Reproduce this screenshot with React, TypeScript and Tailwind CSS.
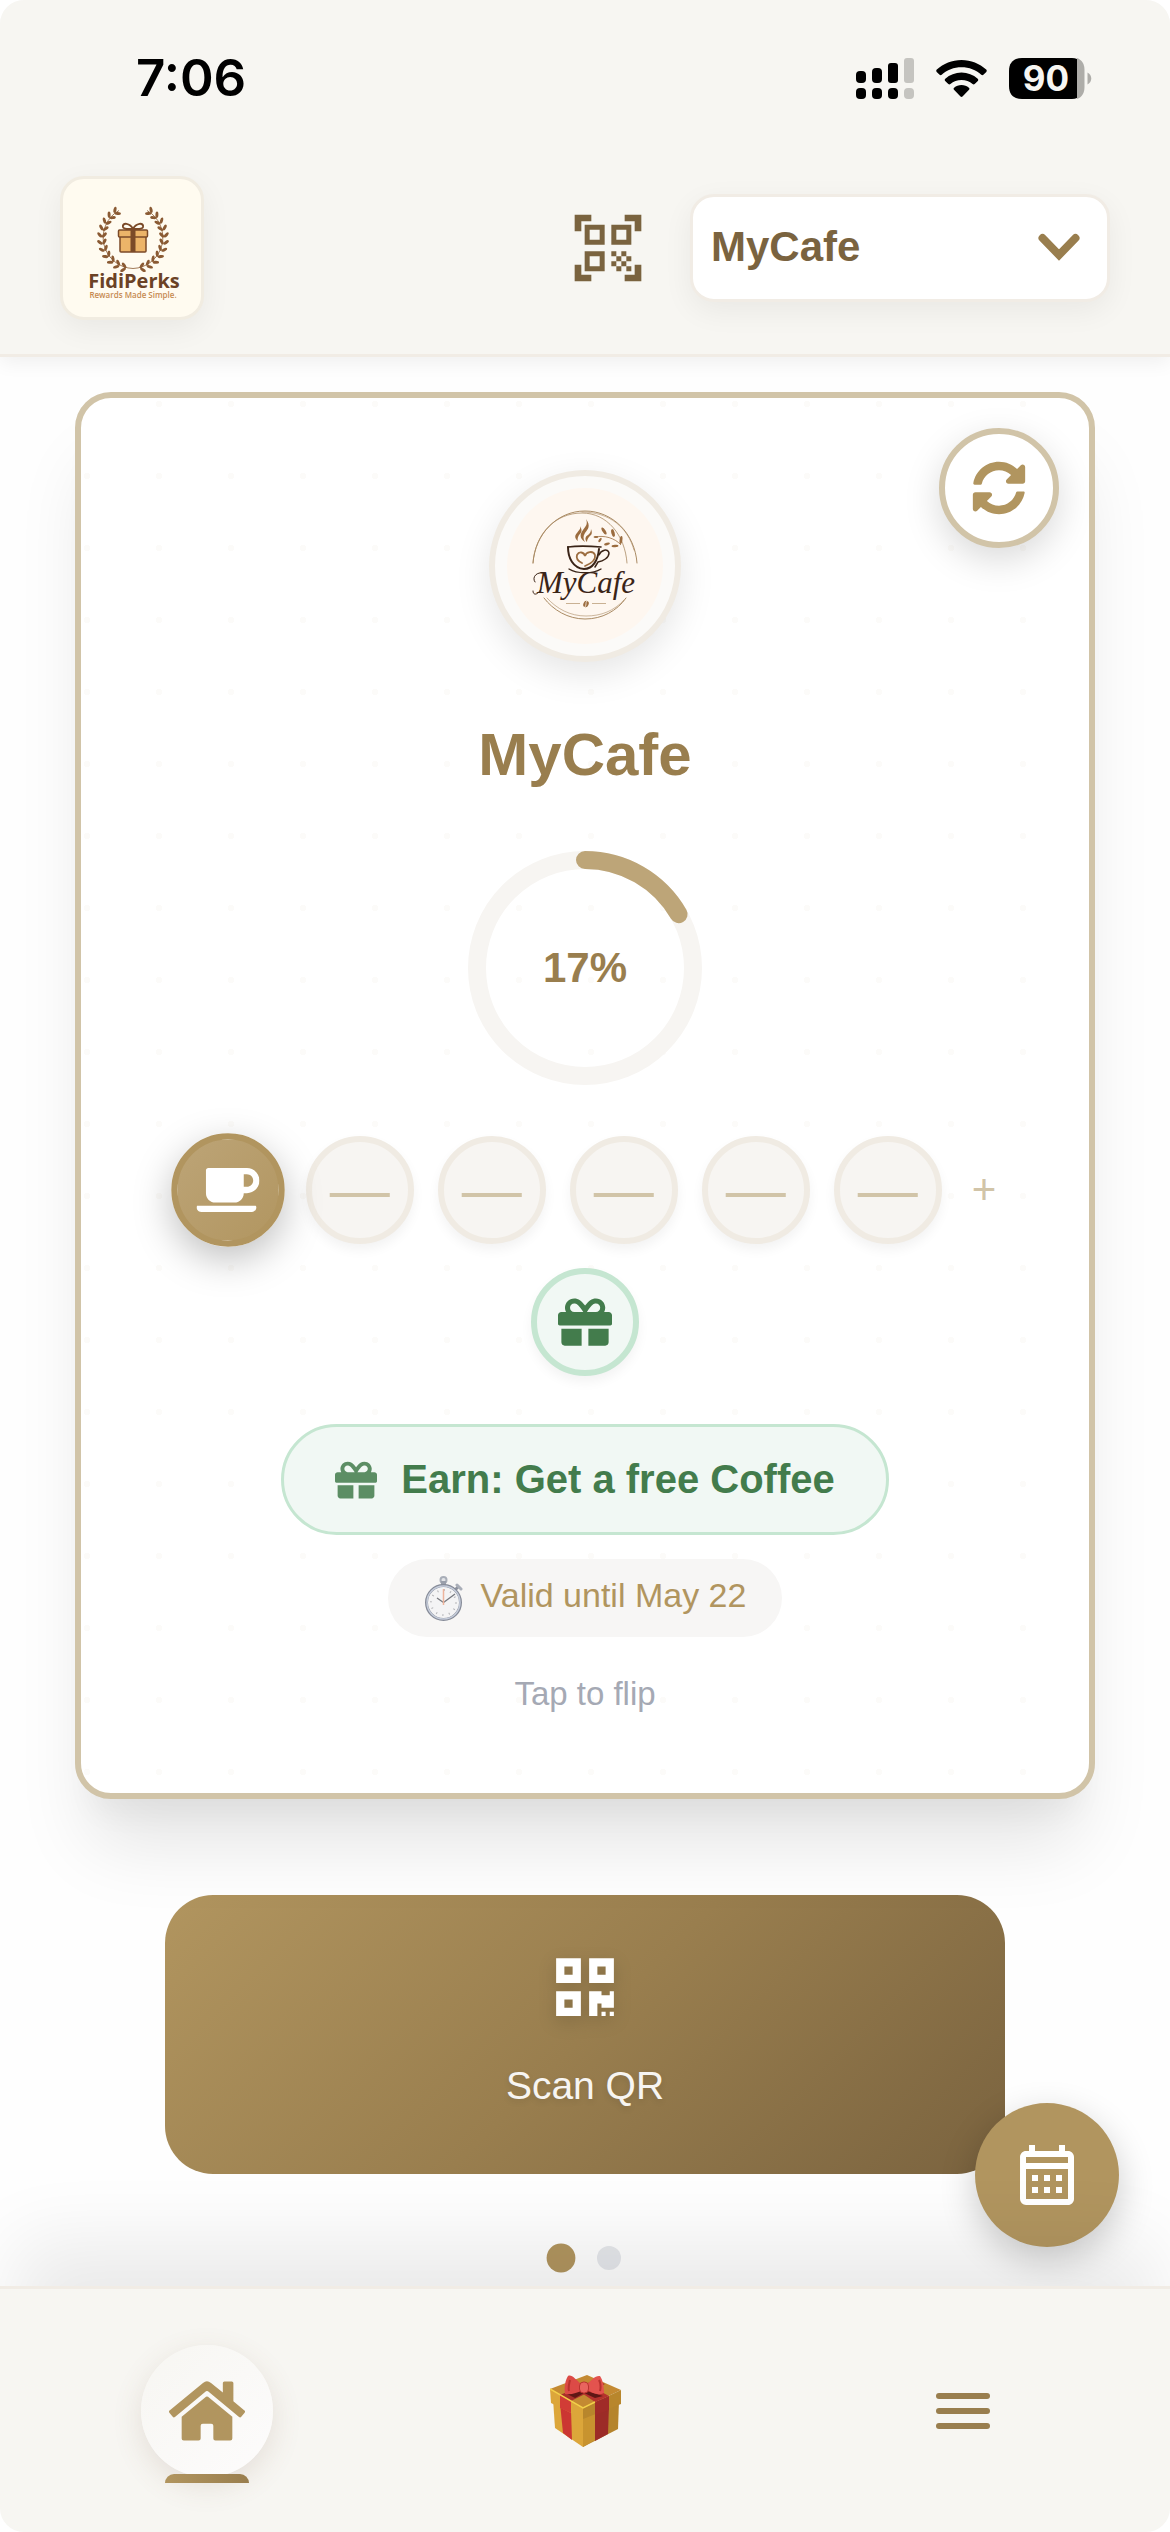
import { useState } from "react";
import { FaCoffee, FaGift, FaHome, FaQrcode, FaSyncAlt } from "react-icons/fa";
import { MdOutlineCalendarMonth, MdQrCodeScanner } from "react-icons/md";

const cafes = ["MyCafe"];
const TOTAL_STAMPS = 6;
const RING_LENGTH = 2 * Math.PI * 108;

/* STATUS BAR ICONS */
function SignalIcon() {
  return (
    <svg width="58" height="41" viewBox="0 0 58 41" aria-hidden="true">
      <rect x="0" y="13" width="10" height="12" rx="4" />
      <rect x="16" y="10" width="10" height="15" rx="4" />
      <rect x="32" y="5" width="10" height="20" rx="3" />
      <rect x="48" y="0" width="10" height="25" rx="3" fill="#c5c4c0" />
      <rect x="0" y="30" width="10" height="11" rx="4" />
      <rect x="16" y="30" width="10" height="11" rx="4" />
      <rect x="32" y="30" width="10" height="11" rx="4" />
      <rect x="48" y="30" width="10" height="11" rx="4" fill="#c5c4c0" />
    </svg>
  );
}

function WifiIcon() {
  return (
    <svg width="51" height="37" viewBox="0 0 51 37" aria-hidden="true">
      <path d="M25.500 0C35 0 43.600 3.500 50.200 9.600c.7.700.7 1.600.1 2.300l-2.900 2.900c-.6.600-1.500.600-2.100 0C40 9.900 33.100 7.300 25.500 7.300S11 9.900 5.700 14.800c-.6.600-1.500.600-2.100 0L.7 11.900c-.6-.7-.6-1.600.1-2.300C7.400 3.500 16 0 25.500 0Z" />
      <path d="M25.500 12.600c6.200 0 11.800 2.300 16.200 6.100.7.600.7 1.600.1 2.200l-3.100 3.100c-.6.600-1.500.600-2.100.1-3-2.600-6.900-4.100-11.100-4.100s-8.100 1.500-11.100 4.100c-.6.500-1.500.500-2.100-.1l-3.100-3.100c-.6-.6-.6-1.600.1-2.200 4.400-3.800 10-6.100 16.200-6.100Z" />
      <path d="M25.500 25c2.800 0 5.400 1 7.400 2.700.7.600.7 1.500.1 2.100l-6.500 6.700c-.6.600-1.400.600-2 0L18 29.800c-.6-.6-.6-1.500.1-2.100 2-1.700 4.600-2.700 7.400-2.700Z" />
    </svg>
  );
}

function BatteryIcon() {
  return (
    <svg width="83" height="41" viewBox="0 0 83 41" role="img" aria-label="Battery 90 percent">
      <path d="M68 0c5 2 7.500 6 7.500 12v17c0 6-2.500 10-7.500 12Z" fill="#aeada9" />
      <path d="M13 0h50c2 0 3.600.3 5 .9v39.200c-1.400.6-3 .9-5 .9H13C4.500 41 0 36.500 0 28V13C0 4.500 4.500 0 13 0Z" />
      <path d="M78.500 14.500c5 2.500 5 9.500 0 12Z" fill="#aeada9" />
      <text x="37" y="33" textAnchor="middle" fill="#f7f6f2" className="font-['Inter',sans-serif] text-[35px] font-bold">
        90
      </text>
    </svg>
  );
}

/* LOGOS */
function FidiPerksLogo() {
  // leaf pairs follow the left half of the wreath, the right half is its mirror
  const leaves = Array.from({ length: 11 }, (_, i) => {
    const angle = 103 + i * 13;
    const rad = (angle * Math.PI) / 180;
    return { x: 70 + 31 * Math.cos(rad), y: 59 + 31 * Math.sin(rad), angle };
  });
  const half = (
    <>
      <path d="M70 89.500A31 31 0 0 1 56 31.500" fill="none" stroke="#8a5a33" strokeWidth=".8" />
      {leaves.map((leaf) => (
        <g key={leaf.angle} transform={`translate(${leaf.x} ${leaf.y}) rotate(${leaf.angle + 90})`}>
          <ellipse cx="2.500" cy="-2.300" rx="3.200" ry="1.500" transform="rotate(-42 2.500 -2.300)" />
          <ellipse cx="2.500" cy="2.300" rx="3.200" ry="1.500" transform="rotate(42 2.500 2.300)" />
        </g>
      ))}
    </>
  );
  return (
    <svg viewBox="0 0 138 138" className="h-full w-full" role="img" aria-label="FidiPerks">
      <g fill="#8a5a33">{half}</g>
      <g fill="#8a5a33" transform="translate(140 0) scale(-1 1)">
        {half}
      </g>
      <g stroke="#7b4a28" strokeWidth="1.500">
        <rect x="57" y="57" width="26" height="16" rx="1" fill="#ecb469" />
        <rect x="55.500" y="51" width="29" height="7" rx="1" fill="#ecb469" />
        <path d="M70 50c-3-6-11-7-10-2 1 3 6 2 10 2Zm0 0c3-6 11-7 10-2-1 3-6 2-10 2Z" fill="none" strokeWidth="2" />
      </g>
      <rect x="67.500" y="49" width="5" height="24" fill="#7b4a28" />
      <text x="71" y="109" textAnchor="middle" fill="#6b4226" className="font-['Open_Sans',sans-serif] text-[20px] font-bold">
        FidiPerks
      </text>
      <text x="70" y="119" textAnchor="middle" fill="#c68a50" className="font-['Open_Sans',sans-serif] text-[8px] font-semibold">
        Rewards Made Simple.
      </text>
    </svg>
  );
}

function MyCafeLogo() {
  return (
    <svg viewBox="0 0 156 156" className="size-[156px] rounded-full bg-[#fef7f0]" role="img" aria-label="MyCafe">
      <g fill="none" stroke="#a98a63" strokeWidth="1" strokeLinecap="round">
        <path d="M26 75C28 46 50 23 78 23s50 23 52 52" />
        <path d="M26 75C28 46 48 25 75 25c25 0 43 22 45 50" strokeWidth=".8" />
        <path d="M75 24c28 0 46 16 52 38" strokeWidth=".6" />
        <path d="M37 110c9 12 24 21 41 21s32-8 41-21" />
        <path d="M40 110c10 11 23 18 39 18 15 0 28-5 38-16" strokeWidth=".6" />
      </g>
      <g fill="#9b6c3f">
        <path d="M79 31c5 7 2 10-1 14-2 3-2 6 0 9-6-4-5-8-2-12 3-4 5-6 3-11Z" />
        <path d="M73 38c3 5 1 7-1 9-1 2-2 4-1 6-4-3-3-6-1-8 2-3 4-4 3-7ZM84 41c2 5 0 6-2 8-1 1-2 3-2 5-3-3-1-6 1-7 2-2 3-3 3-6Z" />
        <ellipse cx="97" cy="43" rx="4" ry="1.600" transform="rotate(58 97 43)" />
        <ellipse cx="106" cy="45" rx="4" ry="1.600" transform="rotate(75 106 45)" />
        <ellipse cx="114" cy="52" rx="4" ry="1.400" transform="rotate(98 114 52)" />
        <ellipse cx="93" cy="52" rx="2.500" ry="1.100" transform="rotate(125 93 52)" />
        <ellipse cx="100" cy="56" rx="3" ry="1.200" transform="rotate(165 100 56)" />
        <ellipse cx="108" cy="58" rx="3.500" ry="1.200" transform="rotate(175 108 58)" />
        <ellipse cx="89" cy="49" rx="2.500" ry="1" />
        <ellipse cx="79" cy="116" rx="2.600" ry="3.300" transform="rotate(25 79 116)" />
      </g>
      <path d="M88 49c9-2 20 1 26 8" fill="none" stroke="#9b6c3f" strokeWidth=".8" />
      <path d="M80 113c-2 2 0 3-2 6" fill="none" stroke="#fef7f0" strokeWidth=".8" />
      <path d="M59 115.500h14M85 115.500h14" stroke="#c9b193" strokeWidth="1" />
      <g fill="none" stroke="#3a2417" strokeLinecap="round">
        <path d="M61 59c7-1 22-1 33 0" strokeWidth="1.600" />
        <path d="M61 59c0 11 5 21 16 22 9 0 14-9 15-20" strokeWidth="2" />
        <path d="M92 67c2-5 9-7 10-2 0 5-6 8-11 9l-3 5" strokeWidth="1.500" />
        <path d="M62 81c8 5 24 5 32 0" strokeWidth="1.400" />
      </g>
      <path d="M75 75c-4-2-6-5-5-8 2-4 7-3 8 1 1-4 8-6 10-1 1 5-5 9-10 11" fill="none" stroke="#9b6c3f" strokeWidth="1.800" strokeLinecap="round" />
      <path d="M38 86c-7-4-14 3-10 8M34 101c-3 6-8 7-8 2" fill="none" stroke="#3a2417" strokeWidth="1" strokeLinecap="round" />
      <text x="79" y="105" textAnchor="middle" fill="#3a2417" className="font-['Liberation_Serif',serif] text-[31px] italic">
        MyCafe
      </text>
    </svg>
  );
}

function StopwatchIcon() {
  return (
    <svg width="39" height="45" viewBox="0 0 39 45" aria-hidden="true">
      <circle cx="19.500" cy="4" r="3" fill="#e3e4e8" stroke="#a9aeb8" strokeWidth="2" />
      <rect x="17" y="5" width="5" height="5" fill="#9a9fab" />
      <path d="m31 14 4-4" stroke="#8d929e" strokeWidth="3" />
      <path d="m33 9 4 4" stroke="#a9aeb8" strokeWidth="3" strokeLinecap="round" />
      <circle cx="19.500" cy="26.500" r="17" fill="#f4f4f5" stroke="#878c99" strokeWidth="3" />
      <circle cx="19.500" cy="26.500" r="16.500" fill="none" stroke="#c6cddb" strokeWidth="1.500" />
      <circle cx="19.500" cy="26.500" r="12.500" fill="none" stroke="#b3b3b6" strokeWidth="2" strokeDasharray="1 5.540" />
      <path d="M19.500 26.500 13 22M19.500 26.500 31 18" stroke="#77797f" strokeWidth="1.300" />
      <path d="M19.500 29V13" stroke="#eeb49c" strokeWidth="1.500" />
    </svg>
  );
}

function PresentIcon() {
  return (
    <svg width="71" height="72" viewBox="0 0 71 72" aria-hidden="true">
      <path d="M3 24 33 42v30L5 53Z" fill="#dca63a" />
      <path d="M33 42 69 26l-1 28-35 18Z" fill="#b5842d" />
      <path d="M33 42l12-5v28l-12 7Z" fill="#c8932f" />
      <path d="m10 28 11 7 1 30-9-7Z" fill="#cb3632" />
      <path d="m45 37 14-7-1 29-13 7Z" fill="#9c2b27" />
      <path d="M0 14 37 0l34 15-38 18Z" fill="#c48a32" />
      <path d="M0 14 33 33v11L1 28Z" fill="#dca63a" />
      <path d="m33 33 38-18v14L33 44Z" fill="#b8862c" />
      <path d="m10 20 11 6v12l-11-5Z" fill="#d13c36" />
      <path d="m45 27 14-6v14l-14 5Z" fill="#a02b28" />
      <path d="m10 20 35-15 10 4-34 17Z" fill="#a82f2a" />
      <path d="m20 10 25 17 14-6L35 8Z" fill="#b5322d" />
      <path d="M0 14 33 33l12-6" fill="none" stroke="#f3cf49" strokeWidth="1.500" />
      <path d="M17 19 33 15l20 6-8 2-11-5-9 5Z" fill="#5f1715" />
      <path d="M32 10C26 5 22-1 18 1c-3 5-4 12-3 18 6 1 12-1 18-4Z" fill="#dc4a46" />
      <path d="M36 10c5-4 9-10 14-9 3 4 4 12 4 17-6 3-12 0-18-4Z" fill="#e3534e" />
      <path d="M20 5c-1 4-2 8-1 11M49 5c2 4 2 7 1 11" fill="none" stroke="#b9322f" strokeWidth="2" />
      <rect x="29.500" y="7" width="9" height="11" rx="4" fill="#e9645e" stroke="#b9322f" strokeWidth="1" />
    </svg>
  );
}

/* LOYALTY CARD */
function ProgressRing({ stamps }: { stamps: number }) {
  const ratio = stamps / TOTAL_STAMPS;
  return (
    <div className="relative mt-[60px] size-[234px]">
      <svg viewBox="0 0 234 234" className="size-full -rotate-90" aria-hidden="true">
        <circle cx="117" cy="117" r="108" fill="none" stroke="#f7f5f2" strokeWidth="18" />
        <circle
          cx="117"
          cy="117"
          r="108"
          fill="none"
          stroke="#bda578"
          strokeWidth="18"
          strokeLinecap="round"
          strokeDasharray={`${ratio * RING_LENGTH} ${RING_LENGTH}`}
        />
      </svg>
      <span className="absolute inset-0 flex items-center justify-center pb-0.5 text-[42px] font-bold text-[#997e4e]">
        {Math.round(ratio * 100)}%
      </span>
    </div>
  );
}

function Stamp({ filled }: { filled: boolean }) {
  if (filled) {
    return (
      <div className="flex size-[108px] scale-105 items-center justify-center rounded-full border-6 border-[#b1955f] bg-linear-135 from-[#bda578] to-[#b1955f] bg-origin-border text-white shadow-[0_12px_36px_rgba(0,0,0,0.25)]">
        <FaCoffee size={60} />
      </div>
    );
  }
  return (
    <div className="flex size-[108px] items-center justify-center rounded-full border-6 border-[#f0ebe3] bg-[#f7f5f2] text-[60px] leading-none text-[#d1c4a8] shadow-[0_6px_12px_rgba(0,0,0,0.05)]">
      —
    </div>
  );
}

export default function App() {
  const [cafe, setCafe] = useState(cafes[0]);
  const stamps = 1;

  return (
    <div className="flex min-h-screen w-full flex-col overflow-hidden rounded-3xl bg-[#fefefe] font-['Liberation_Sans',Arial,sans-serif]">
      {/* HEADER */}
      <header className="relative z-10 border-b-3 border-[#f1ece5] bg-[#f7f6f2] shadow-[0_6px_18px_rgba(0,0,0,0.06)]">
        <div className="flex h-[156px] items-center justify-between pr-[78px] pl-[136px]">
          <span className="font-['Inter',sans-serif] text-[51px] font-semibold text-black">7:06</span>
          <div className="flex items-center gap-[22px]">
            <SignalIcon />
            <WifiIcon />
            <BatteryIcon />
          </div>
        </div>

        <div className="flex items-center justify-between px-[60px] pt-5 pb-[34px]">
          <div className="size-36 overflow-hidden rounded-3xl border-3 border-[#f1ece1] bg-[#fffbf0] shadow-[0_9px_30px_rgba(0,0,0,0.06)]">
            <FidiPerksLogo />
          </div>
          <div className="flex items-center gap-[42px]">
            <button type="button" aria-label="Scan code" className="text-[#7a633f]">
              <MdQrCodeScanner size={80} />
            </button>
            <div className="relative">
              <select
                aria-label="Cafe"
                value={cafe}
                onChange={(e) => setCafe(e.target.value)}
                className="h-[108px] w-[420px] appearance-none rounded-3xl border-3 border-[#f1ece5] bg-white pr-24 pb-1 pl-[18px] text-[42px] font-bold text-[#7a633f] shadow-[0_9px_30px_rgba(0,0,0,0.06)]"
              >
                {cafes.map((name) => (
                  <option key={name}>{name}</option>
                ))}
              </select>
              <svg
                viewBox="0 0 42 29"
                className="pointer-events-none absolute top-[39px] right-[30px] w-[42px]"
                aria-hidden="true"
              >
                <path d="m4.500 5 16.500 17L37.500 5" fill="none" stroke="#997e4e" strokeWidth="8" strokeLinecap="round" />
              </svg>
            </div>
          </div>
        </div>
      </header>

      <main className="flex flex-1 flex-col items-center px-[75px] pt-[35px]">
        {/* LOYALTY CARD */}
        <section className="relative flex w-full flex-col items-center rounded-[36px] border-6 border-[#d1c4a8] bg-white bg-[radial-gradient(circle_at_6px_6px,#fcfbf9_3px,transparent_3px)] bg-size-[72px_72px] px-12 pt-[72px] pb-[75px] shadow-[0_60px_75px_-15px_rgba(0,0,0,0.1),0_30px_30px_-15px_rgba(0,0,0,0.04)]">
          <button
            type="button"
            aria-label="Refresh"
            className="absolute top-[30px] right-[30px] flex size-[120px] items-center justify-center rounded-full border-6 border-[#d1c4a8] bg-white text-[#b1955f] shadow-[0_12px_36px_rgba(0,0,0,0.15)]"
          >
            <FaSyncAlt size={54} />
          </button>

          <div className="flex size-48 items-center justify-center rounded-full border-6 border-[#f0ebe3] bg-[#fbfaf8] shadow-[0_12px_36px_rgba(0,0,0,0.1)]">
            <MyCafeLogo />
          </div>

          <h1 className="mt-[57px] text-[60px] leading-[72px] font-bold text-[#997e4e]">{cafe}</h1>

          <ProgressRing stamps={stamps} />

          <div className="mt-[51px] flex flex-wrap items-center justify-center gap-6">
            {Array.from({ length: TOTAL_STAMPS }, (_, i) => (
              <Stamp key={i} filled={i < stamps} />
            ))}
            <span className="pl-1.5 text-[42px] leading-none text-[#d1c4a8]">+</span>
            <div className="flex size-[108px] items-center justify-center rounded-full border-6 border-[#c5e6d1] bg-[#f1f8f4] text-[#437c4c] shadow-[0_6px_12px_rgba(0,0,0,0.05)]">
              <FaGift size={54} />
            </div>
          </div>

          <div className="mt-12 flex h-[111px] items-center gap-6 rounded-full border-3 border-[#c5e6d1] bg-[#f1f8f4] px-[51px] text-[40px] font-bold text-[#437c4c]">
            <FaGift size={42} className="opacity-85" />
            <span className="pb-0.5">Earn: Get a free Coffee</span>
          </div>

          <div className="mt-6 flex h-[78px] items-center gap-[18px] rounded-full bg-[#f7f6f5] px-9 text-[34px] text-[#b1955f]">
            <StopwatchIcon />
            <span className="pb-1.5">Valid until May 22</span>
          </div>

          <p className="mt-[33px] text-[33px] leading-[48px] text-[#a5a9b4]">Tap to flip</p>
        </section>

        {/* SCAN BUTTON */}
        <button
          type="button"
          className="mt-24 flex h-[279px] w-[840px] max-w-full flex-col items-center justify-center gap-[42px] rounded-[48px] bg-linear-135 from-[#b1955f] via-[#997e4e] via-50% to-[#7a633f] pb-1.5 text-[39px] leading-[48px] text-[#f7f5f2]"
        >
          <FaQrcode size={66} className="text-white drop-shadow-[0_6px_9px_rgba(0,0,0,0.15)]" />
          <span className="text-shadow-[0_3px_6px_rgba(0,0,0,0.1)]">Scan QR</span>
        </button>

        {/* CAROUSEL DOTS */}
        <div className="mt-[72px] flex gap-6">
          <button type="button" aria-label="Card 1" className="size-6 scale-120 rounded-full bg-[#b1955f]" />
          <button type="button" aria-label="Card 2" className="size-6 rounded-full bg-[#e5e7eb]" />
        </div>
      </main>

      {/* CALENDAR BUTTON */}
      <button
        type="button"
        aria-label="Calendar"
        className="fixed right-[51px] bottom-[285px] flex size-36 items-center justify-center rounded-full bg-[#b1955f] text-white shadow-[0_12px_36px_rgba(0,0,0,0.2)]"
      >
        <MdOutlineCalendarMonth size={72} />
      </button>

      {/* BOTTOM NAV */}
      <nav className="relative z-10 grid h-[246px] grid-cols-3 items-start border-t-3 border-[#f1ece5] bg-[#f7f6f2] px-[18px] pt-14 shadow-[0_-60px_75px_-15px_rgba(0,0,0,0.08)]">
        <a
          href="#home"
          aria-label="Home"
          className="relative flex size-[132px] items-center justify-center justify-self-center rounded-full bg-linear-135 from-[#f7f6f2] to-[#fdfcfc] text-[#b1955f] shadow-[0_9px_30px_rgba(122,85,63,0.14)]"
        >
          <FaHome size={76} />
          <span className="absolute -bottom-1.5 h-[9px] w-[84px] rounded-t-[9px] bg-linear-to-r from-[#b1955f] to-[#997e4e]" />
        </a>
        <a href="#rewards" aria-label="Rewards" className="flex size-[132px] items-center justify-center justify-self-center">
          <PresentIcon />
        </a>
        <button
          type="button"
          aria-label="Menu"
          className="flex size-[132px] items-center justify-center justify-self-center text-[#997e4e]"
        >
          <svg width="54" height="36" viewBox="0 0 54 36" fill="currentColor" aria-hidden="true">
            <rect width="54" height="6" rx="3" />
            <rect y="15" width="54" height="6" rx="3" />
            <rect y="30" width="54" height="6" rx="3" />
          </svg>
        </button>
      </nav>
    </div>
  );
}
